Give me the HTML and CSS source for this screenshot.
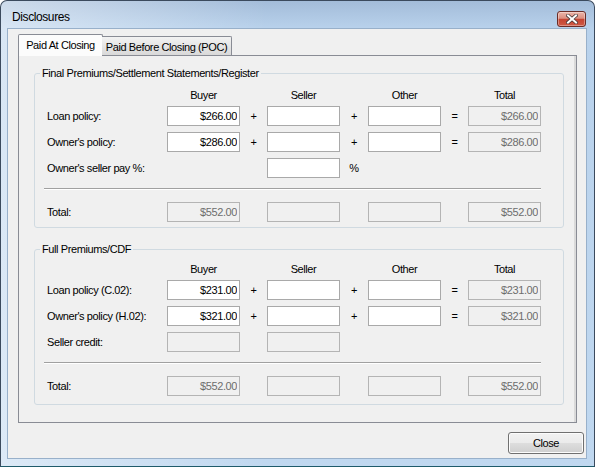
FILE: index.html
```html
<!DOCTYPE html>
<html>
<head>
<meta charset="utf-8">
<title>Disclosures</title>
<link rel="stylesheet" href="styles.css">
</head>
<body>
<div class="window">
  <div class="titlebar">
    <span class="title">Disclosures</span>
    <span class="close-x" aria-label="Close">
      <svg width="12" height="10" viewBox="0 0 12 10">
        <path d="M2 1.5 L10 8.5 M10 1.5 L2 8.5" stroke="#4a3a3a" stroke-width="3.6" stroke-linecap="square" fill="none"/>
        <path d="M2 1.5 L10 8.5 M10 1.5 L2 8.5" stroke="#ffffff" stroke-width="2" stroke-linecap="square" fill="none"/>
      </svg>
    </span>
  </div>
  <div class="client">
    <div class="tabs">
      <div class="tab active">Paid At Closing</div>
      <div class="tab">Paid Before Closing (POC)</div>
    </div>
    <div class="panel">
      <fieldset class="group group-a">
        <legend>Final Premiums/Settlement Statements/Register</legend>
        <div class="row head">
          <span></span><span class="hc">Buyer</span><span></span><span class="hc">Seller</span><span></span><span class="hc">Other</span><span></span><span class="hc">Total</span>
        </div>
        <div class="row first">
          <span class="lbl">Loan policy:</span>
          <input class="field" readonly value="$266.00">
          <span class="op">+</span>
          <input class="field" readonly value="">
          <span class="op">+</span>
          <input class="field" readonly value="">
          <span class="op">=</span>
          <input class="field" disabled value="$266.00">
        </div>
        <div class="row">
          <span class="lbl">Owner's policy:</span>
          <input class="field" readonly value="$286.00">
          <span class="op">+</span>
          <input class="field" readonly value="">
          <span class="op">+</span>
          <input class="field" readonly value="">
          <span class="op">=</span>
          <input class="field" disabled value="$286.00">
        </div>
        <div class="row">
          <span class="lbl">Owner's seller pay %:</span>
          <span></span>
          <span></span>
          <input class="field" readonly value="">
          <span class="op">%</span>
        </div>
        <div class="sep"></div>
        <div class="row total">
          <span class="lbl">Total:</span>
          <input class="field" disabled value="$552.00">
          <span></span>
          <input class="field" disabled value="">
          <span></span>
          <input class="field" disabled value="">
          <span></span>
          <input class="field" disabled value="$552.00">
        </div>
      </fieldset>

      <fieldset class="group group-b">
        <legend>Full Premiums/CDF</legend>
        <div class="row head">
          <span></span><span class="hc">Buyer</span><span></span><span class="hc">Seller</span><span></span><span class="hc">Other</span><span></span><span class="hc">Total</span>
        </div>
        <div class="row first">
          <span class="lbl">Loan policy (C.02):</span>
          <input class="field" readonly value="$231.00">
          <span class="op">+</span>
          <input class="field" readonly value="">
          <span class="op">+</span>
          <input class="field" readonly value="">
          <span class="op">=</span>
          <input class="field" disabled value="$231.00">
        </div>
        <div class="row">
          <span class="lbl">Owner's policy (H.02):</span>
          <input class="field" readonly value="$321.00">
          <span class="op">+</span>
          <input class="field" readonly value="">
          <span class="op">+</span>
          <input class="field" readonly value="">
          <span class="op">=</span>
          <input class="field" disabled value="$321.00">
        </div>
        <div class="row">
          <span class="lbl">Seller credit:</span>
          <input class="field" disabled value="">
          <span></span>
          <input class="field" disabled value="">
        </div>
        <div class="sep"></div>
        <div class="row total">
          <span class="lbl">Total:</span>
          <input class="field" disabled value="$552.00">
          <span></span>
          <input class="field" disabled value="">
          <span></span>
          <input class="field" disabled value="">
          <span></span>
          <input class="field" disabled value="$552.00">
        </div>
      </fieldset>
    </div>
    <div class="buttons">
      <button class="btn">Close</button>
    </div>
  </div>
</div>
</body>
</html>
```

FILE: styles.css
```css
html, body {
  margin: 0;
  padding: 0;
  background: #ffffff;
}

body {
  font-family: "Liberation Sans", Arial, sans-serif;
  font-size: 11px;
  letter-spacing: -0.4px;
  color: #000;
}

.window {
  width: 595px;
  height: 467px;
  box-sizing: border-box;
  border: 1px solid #3b4a5d;
  border-bottom-color: #1f5b6b;
  border-radius: 7px 7px 0 0;
  background:
    linear-gradient(to right, rgba(255,255,255,0.45), rgba(255,255,255,0) 45%),
    linear-gradient(#a3bcd9, #b9d2ec 28px, #c0d8f0);
  display: flex;
  flex-direction: column;
  padding: 0 7px 7px 6px;
  overflow: hidden;
}

.titlebar {
  height: 27px;
  flex: none;
  display: flex;
  align-items: center;
  justify-content: space-between;
  padding-left: 5px;
  padding-right: 1px;
}

.title {
  font-size: 12px;
  letter-spacing: -0.4px;
  color: #000;
  margin-top: 4px;
}

.close-x {
  width: 29px;
  height: 16px;
  box-sizing: border-box;
  border: 1px solid #6b2c26;
  border-radius: 3px;
  background: linear-gradient(#ecb6aa 0%, #dc8f80 45%, #c54432 52%, #cf5a46 100%);
  display: flex;
  align-items: center;
  justify-content: center;
  margin-top: 8px;
  box-shadow: inset 0 0 0 1px rgba(255,255,255,0.35);
}

.close-x svg {
  display: block;
}

.client {
  flex: 1;
  background: #f0f0f0;
  border: 1px solid #98b0ca;
  display: flex;
  flex-direction: column;
  padding: 5px 2px 4px 10px;
  min-height: 0;
}

.tabs {
  display: flex;
  align-items: flex-end;
  height: 22px;
  margin-bottom: -1px;
  position: relative;
  z-index: 1;
  flex: none;
}

.tab {
  box-sizing: border-box;
  border: 1px solid #898c95;
  border-bottom: none;
  text-align: center;
  white-space: nowrap;
}

.tab.active {
  width: 85px;
  height: 22px;
  background: #fcfcfc;
  border-radius: 2px 2px 0 0;
  padding-top: 4px;
}

.tab:not(.active) {
  width: 130px;
  height: 19px;
  margin-left: -1px;
  margin-bottom: 1px;
  background: linear-gradient(#f3f3f3, #e5e5e5 50%, #d9d9d9);
  padding-top: 4px;
  border-left: none;
  border-radius: 0 2px 0 0;
}

.panel {
  flex: 1;
  box-sizing: border-box;
  border: 1px solid #898c95;
  background: #f0f0f0;
  margin-right: 7px;
  padding: 11px 12px 0 15px;
  box-shadow: inset -2px 0 0 #dadada;
}

.group {
  margin: 0;
  border: 1px solid #d0dae1;
  border-radius: 3px;
  min-width: 0;
  padding: 8px 0 5px 12px;
}

.group legend {
  padding: 0 2px;
  margin-left: -7px;
  line-height: 13px;
  font-size: 11px;
}

.group-b {
  margin-top: 15px;
  padding-top: 6px;
  padding-bottom: 8px;
}

.row {
  display: grid;
  grid-template-columns: 120px 73px 27px 73px 28px 73px 27px 73px;
  align-items: center;
  height: 20px;
  margin-top: 6px;
}

.row.head {
  height: 14px;
  line-height: 14px;
  margin-top: 0;
}

.row.first {
  margin-top: 4px;
}

.row.total {
  margin-top: 12px;
}

.hc {
  text-align: center;
}

.lbl {
  white-space: nowrap;
}

.op {
  text-align: center;
  font-size: 11px;
}

.field {
  box-sizing: border-box;
  width: 73px;
  height: 20px;
  margin: 0;
  border: 1px solid #a9a9a9;
  border-radius: 0;
  background: #ffffff;
  font-family: inherit;
  font-size: 11px;
  letter-spacing: -0.4px;
  color: #000;
  text-align: right;
  padding: 0 2px 0 2px;
  outline: none;
}

.field:disabled {
  background: #f0f0f0;
  border-color: #b4b4b4;
  color: #6d6d6d;
  -webkit-text-fill-color: #6d6d6d;
}

.sep {
  margin-top: 10px;
  margin-left: -3px;
  width: 497px;
  height: 1px;
  background: #a0a0a0;
  border-bottom: 1px solid #ffffff;
}

.buttons {
  display: flex;
  justify-content: flex-end;
  margin-top: 9px;
  flex: none;
}

.btn {
  width: 76px;
  height: 22px;
  box-sizing: border-box;
  border: 1px solid #707070;
  border-radius: 3px;
  background: linear-gradient(#f2f2f2 0%, #ebebeb 48%, #dddddd 52%, #cfcfcf 100%);
  font-family: inherit;
  font-size: 11px;
  letter-spacing: -0.4px;
  color: #000;
  padding: 0;
  box-shadow: inset 0 0 0 1px #fcfcfc;
}
```
